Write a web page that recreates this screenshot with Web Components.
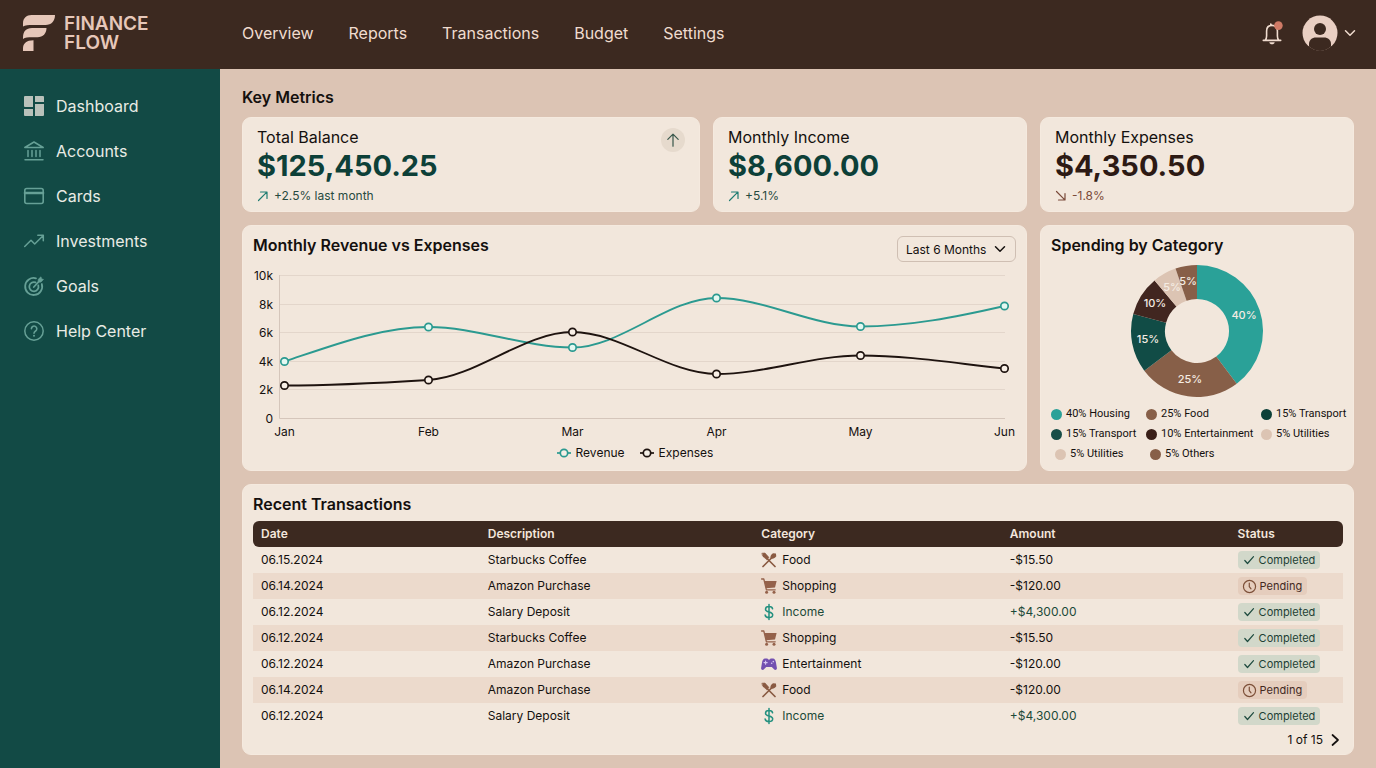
<!DOCTYPE html>
<html lang="en">
<head>
<meta charset="utf-8">
<meta name="viewport" content="width=device-width, initial-scale=1">
<title>Finance Flow</title>
<style>
  :root {
    --brown: #3c2920;
    --teal-dark: #124a45;
    --sand: #dcc4b4;
    --card: #f2e7dc;
    --stripe: #ecdacc;
    --ink: #14100e;
    --cream: #f0dccf;
  }
  body {
    margin: 0;
    font-family: Inter, "Liberation Sans", sans-serif;
    color: var(--ink);
    background: var(--sand);
  }
</style>
</head>
<body>
<ff-app>
  <ff-topbar slot="top"></ff-topbar>
  <ff-sidebar slot="side"></ff-sidebar>
  <ff-metric label="Total Balance" value="$125,450.25" delta="+2.5% last month" trend="up" badge></ff-metric>
  <ff-metric label="Monthly Income" value="$8,600.00" delta="+5.1%" trend="up"></ff-metric>
  <ff-metric label="Monthly Expenses" value="$4,350.50" delta="-1.8%" trend="down"></ff-metric>
  <ff-line-chart></ff-line-chart>
  <ff-spending></ff-spending>
  <ff-transactions></ff-transactions>
</ff-app>

<script>
const ICONS = {
  dashboard: ['0 0 20 20', '<path fill="currentColor" stroke="none" d="M1 0h8v11H1a1 1 0 0 1-1-1V1a1 1 0 0 1 1-1zM11 0h8a1 1 0 0 1 1 1v5h-9zM0 13h9v7H1a1 1 0 0 1-1-1zM11 8h9v11a1 1 0 0 1-1 1h-8z"/>'],
  bank: ['0 0 20 20', '<path stroke-width="1.5" d="M.8 6.5 10 1l9.2 5.5zM4 9.5v6M8 9.5v6M12 9.5v6M16 9.5v6M1 18.8h18"/>'],
  card: ['0 0 20 20', '<rect x=".8" y="2.5" width="18.4" height="15" rx="2" stroke-width="1.6"/><path d="M1 7h18" stroke-width="2.6"/>'],
  trend: ['0 0 20 20', '<path stroke-width="1.5" d="M.7 15.5 7 9.2l3.7 3.8L19 4.7M13.8 4.2h5.5v5.5"/>'],
  target: ['0 0 20 20', '<path stroke-width="1.8" d="M12 2.3A8.5 8.5 0 1 0 17.8 8M11.5 6.4a4.6 4.6 0 1 0 2.8 3M9.8 11l4.7-5"/><path d="m14 6 .3-2.8L17 .8l.5 2 2 .6L17 6z" fill="currentColor" stroke-width=".6"/>'],
  help: ['0 0 20 20', '<circle cx="10" cy="10" r="9.2" stroke-width="1.5"/><path stroke-width="1.6" d="M7.4 7.800a2.7 2.7 0 1 1 4.2 2.2c-1 .7-1.600 1.200-1.600 2.300"/><circle cx="10" cy="14.8" r="1" fill="currentColor" stroke="none"/>'],
  bell: ['0 0 20 24', '<path stroke-width="1.6" d="M1.3 19.4h17.4M3.3 19c1-1 1.3-2.5 1.3-4V10c0-3.2 2-5.6 5.4-5.6 3.3 0 5.4 2.4 5.4 5.6v5c0 1.5.3 3 1.3 4M8.8 4V3"/><path d="M7.3 21.3h5.4c-.3 1.5-1.3 2-2.7 2s-2.4-.5-2.7-2z" fill="currentColor" stroke="none"/><circle cx="16.4" cy="4.6" r="4.3" fill="#cf7a66" stroke="none"/>'],
  avatar: ['0 0 36 36', '<circle cx="18" cy="18" r="17.5" fill="#e9cfc3" stroke="none"/><circle cx="18" cy="14" r="6" fill="#3c2920" stroke="none"/><path d="M7 31.5V29c0-4 3-6.5 7-6.5h8c4 0 7 2.5 7 6.5v2.5A17.5 17.5 0 0 1 18 36 17.5 17.5 0 0 1 7 31.5z" fill="#3c2920" stroke="none"/>'],
  down: ['0 0 12 12', '<path stroke-width="1.5" d="m1.5 3.8 4.5 4.4 4.5-4.4"/>'],
  right: ['0 0 12 12', '<path stroke-width="1.7" d="M3.5 1 9 6l-5.5 5"/>'],
  arrowUp: ['0 0 14 14', '<path stroke-width="1.2" d="M7 13.2V1.2M1.8 6.4 7 1.2l5.2 5.2"/>'],
  up: ['0 0 12 12', '<path stroke-width="1.2" d="M1.5 10.5 9.8 2.2M3.5 2h6.5v6.5"/>'],
  fall: ['0 0 12 12', '<path stroke-width="1.2" d="M1.5 1.5 9.8 9.8M10 3.5v6.5H3.5"/>'],
  check: ['0 0 12 12', '<path stroke-width="1.2" d="m1.8 6.5 2.7 3 6-6.8"/>'],
  clock: ['0 0 12 12', '<circle cx="6" cy="6" r="5.6" stroke-width="1.1"/><path stroke-width="1.1" d="M5.8 2.8v3.4l1.6 2"/>'],
  food: ['0 0 16 16', '<path stroke-width="1.7" d="M2 14.5 10.5 6M14 14.5 6.5 7"/><path d="M1.2 1.2 4 1l4 4.5-2.2 2.2L1.8 4.2z" fill="currentColor" stroke-width=".6"/><path d="M9.6 6.4c-.8-1.8.6-4 2.4-5.2l2.9.4.4 2.7c-1.4 2-3.6 3.2-5.7 2.1z" fill="currentColor" stroke="none"/>'],
  cart: ['0 0 16 16', '<path stroke-width="1.3" d="M.6 1h2.2l2.6 10.8h8.8"/><path d="M3.4 3h12.2l-1.6 6.4-9 .8z" fill="currentColor" stroke="none"/><circle cx="5.6" cy="14.2" r="1.5" fill="currentColor" stroke="none"/><circle cx="13" cy="14.2" r="1.5" fill="currentColor" stroke="none"/>'],
  dollar: ['0 0 16 16', '<path stroke-width="1.5" d="M8 .6v14.8M11.6 4.8C11.4 3.3 10 2.5 8 2.5S4.500 3.5 4.5 5.2c0 3.8 7.2 1.7 7.2 5.6 0 1.8-1.600 2.800-3.700 2.800s-3.700-1-3.900-2.700"/>'],
  game: ['0 0 16 16', '<path d="M4 2.6h2.4l.8 1h1.6l.8-1H12c1.6 0 2.6 1.6 3 4.2l.9 5.2c.2 1.6-1.7 2.6-2.9 1.3L10.8 11H5.2L3 13.3C1.8 14.6-.1 13.6.1 12L1 6.8C1.4 4.2 2.4 2.6 4 2.6z" fill="#7350b0" stroke="none"/><path d="M4.6 5v3.2M3 6.6h3.2" stroke="#d6c6f2" stroke-width="1.1"/><circle cx="12.3" cy="5.6" r=".8" fill="#d6c6f2" stroke="none"/><circle cx="10.7" cy="7.3" r=".8" fill="#d6c6f2" stroke="none"/>'],
  logo: ['0 0 34 38', '<path fill="#e6c7b9" stroke="none" d="M1 12.5V9.5C1 4 4.5 1 9.5 1H33c0 6-3.5 10-9.5 10H11C6.5 11 3 11 1 12.5zM1 25v-1.5C1 17.5 4 14 10 14h14.5c0 5.5-3.5 9.3-9 9.3h-5.2C6 23.3 3 23.5 1 25zM1 37v-2.5c0-5 3.5-8.2 10.5-8.2V37z"/>']
};

class Base extends HTMLElement {
  connectedCallback() {
    if (this.shadowRoot) return;
    this.attachShadow({ mode: 'open' }).innerHTML = this.render();
  }
  attr(name) { return this.getAttribute(name) || ''; }
}

customElements.define('ff-icon', class extends Base {
  render() {
    const [box, body] = ICONS[this.attr('name')];
    return `<style>
      :host { display: inline-flex; width: 16px; height: 16px; flex: none; }
      svg { width: 100%; height: 100%; display: block; overflow: visible; }
    </style>
    <svg viewBox="${box}" fill="none" stroke="currentColor" stroke-linecap="round" stroke-linejoin="round" aria-hidden="true">${body}</svg>`;
  }
});

customElements.define('ff-app', class extends Base {
  render() {
    return `<style>
      :host { display: grid; grid-template: auto 1fr / 220px minmax(0, 1fr); min-height: 100vh; }
      ::slotted([slot=top]) { grid-column: 1 / -1; }
      main { padding: 18px 22px 13px; }
      h1 { margin: 0 0 9px; font-size: 16px; line-height: 21px; font-weight: 600; }
      .grid { display: grid; grid-template-columns: minmax(0, 458fr) minmax(0, 314fr) minmax(0, 314fr); gap: 13px; }
      ::slotted(ff-line-chart) { grid-column: span 2; }
      ::slotted(ff-transactions) { grid-column: 1 / -1; }
    </style>
    <slot name="top"></slot>
    <slot name="side"></slot>
    <main><h1>Key Metrics</h1><div class="grid"><slot></slot></div></main>`;
  }
});

customElements.define('ff-topbar', class extends Base {
  render() {
    const links = ['Overview', 'Reports', 'Transactions', 'Budget', 'Settings'];
    return `<style>
      :host { display: block; background: var(--brown); color: var(--cream); }
      header { display: flex; align-items: center; box-sizing: border-box; height: 69px; padding: 0 20px 3px 0; }
      .brand { display: flex; align-items: center; gap: 8px; width: 220px; padding-left: 22px; box-sizing: border-box; color: #e6c7b9; text-decoration: none; font-size: 19px; line-height: 19px; font-weight: 600; }
      .brand ff-icon { width: 34px; height: 38px; }
      nav { display: flex; gap: 35px; margin-left: 22px; flex: 1; }
      nav a { color: inherit; text-decoration: none; font-size: 16px; line-height: 24px; }
      button { all: unset; display: flex; align-items: center; cursor: pointer; }
      .bell { margin-right: 20px; }
      .bell ff-icon { width: 20px; height: 24px; }
      .user { gap: 6px; }
      .user ff-icon:first-child { width: 36px; height: 36px; }
      .user ff-icon:last-child { width: 12px; height: 12px; }
    </style>
    <header>
      <a class="brand" href="#"><ff-icon name="logo"></ff-icon><span>FINANCE<br>FLOW</span></a>
      <nav aria-label="Main">${links.map(l => `<a href="#">${l}</a>`).join('')}</nav>
      <button class="bell" aria-label="Notifications"><ff-icon name="bell"></ff-icon></button>
      <button class="user" aria-label="Account menu"><ff-icon name="avatar"></ff-icon><ff-icon name="down"></ff-icon></button>
    </header>`;
  }
});

customElements.define('ff-sidebar', class extends Base {
  render() {
    const items = [['dashboard', 'Dashboard'], ['bank', 'Accounts'], ['card', 'Cards'], ['trend', 'Investments'], ['target', 'Goals'], ['help', 'Help Center']];
    return `<style>
      :host { display: block; background: var(--teal-dark); }
      nav { display: flex; flex-direction: column; gap: 21px; padding: 25px 24px; }
      a { display: flex; align-items: center; gap: 12px; color: #e9ece5; text-decoration: none; font-size: 16px; line-height: 24px; }
      ff-icon { width: 20px; height: 20px; color: #66a096; }
      a:first-child ff-icon { color: #b9c1ba; }
    </style>
    <nav aria-label="Sections">${items.map(([i, t]) => `<a href="#"><ff-icon name="${i}"></ff-icon>${t}</a>`).join('')}</nav>`;
  }
});

customElements.define('ff-panel', class extends Base {
  render() {
    return `<style>
      :host { display: block; box-sizing: border-box; height: 100%; background: var(--card); border: 1px solid #f5eadf; border-radius: 9px; padding: 10px 10px 6px; }
    </style><slot></slot>`;
  }
});

customElements.define('ff-metric', class extends Base {
  render() {
    const up = this.attr('trend') === 'up';
    return `<style>
      :host { display: block; }
      .row { display: flex; justify-content: space-between; padding: 0 4px; }
      h2 { margin: 0; font-size: 16px; line-height: 18px; font-weight: 400; }
      .value { font-size: 29px; line-height: 40px; font-weight: 700; color: ${up ? '#0d4038' : '#2d1a14'}; }
      .delta { display: flex; align-items: center; gap: 5px; font-size: 12px; line-height: 19px; color: ${up ? '#274a40' : '#7a4a3a'}; }
      .delta ff-icon { width: 12px; height: 12px; color: ${up ? '#1f7d72' : '#7a4a3a'}; }
      .badge { display: flex; align-items: center; justify-content: center; width: 24px; height: 24px; border-radius: 50%; background: #e6dacd; color: #37564a; }
      .badge ff-icon { width: 14px; height: 14px; }
    </style>
    <ff-panel><div class="row">
      <div>
        <h2>${this.attr('label')}</h2>
        <div class="value">${this.attr('value')}</div>
        <div class="delta"><ff-icon name="${up ? 'up' : 'fall'}"></ff-icon>${this.attr('delta')}</div>
      </div>
      ${this.hasAttribute('badge') ? '<span class="badge"><ff-icon name="arrowUp"></ff-icon></span>' : ''}
    </div></ff-panel>`;
  }
});

customElements.define('ff-line-chart', class extends Base {
  render() {
    const months = ['Jan', 'Feb', 'Mar', 'Apr', 'May', 'Jun'];
    const x = i => 31.5 + i * 144;
    const revenue = [95.5, 61, 81.5, 32, 60.5, 40];
    const expenses = [119.5, 114, 66, 108, 89.5, 102.5];
    const dots = (ys, c, f) => ys.map((y, i) => `<circle cx="${x(i)}" cy="${y}" r="3.7" fill="${f}" stroke="${c}" stroke-width="1.7"/>`).join('');
    // Tangents are flat at local extremes and follow the slope elsewhere.
    const curve = (ys, slopes) => ys.slice(1).reduce((d, y, i) =>
      d + `C${x(i) + 48} ${ys[i] + slopes[i]} ${x(i + 1) - 48} ${y - slopes[i + 1]} ${x(i + 1)} ${y}`, `M${x(0)} ${ys[0]}`);
    return `<style>
      :host { display: block; }
      .head { display: flex; justify-content: space-between; align-items: flex-start; }
      h2 { margin: 0; font-size: 16px; line-height: 19px; font-weight: 600; }
      .pick { position: relative; display: block; }
      select { appearance: none; display: block; box-sizing: border-box; width: 119px; height: 26px; padding: 0 8px; border: 1px solid #cfbfb3; border-radius: 6px; background: transparent; color: inherit; font: 12px Inter, "Liberation Sans", sans-serif; }
      .pick ff-icon { position: absolute; right: 10px; top: 7px; width: 12px; height: 12px; pointer-events: none; }
      .plot { display: block; width: 100%; margin-top: 4px; overflow: visible; }
      text { font-size: 12px; fill: #14100e; }
      .legend { display: flex; justify-content: center; gap: 14px; margin-top: 4px; font-size: 12px; line-height: 18px; }
      .legend span { display: flex; align-items: center; gap: 4px; }
      .legend svg { width: 16px; height: 12px; }
    </style>
    <ff-panel>
      <div class="head">
        <h2>Monthly Revenue vs Expenses</h2>
        <label class="pick"><select aria-label="Period"><option>Last 6 Months</option><option>Last 12 Months</option></select><ff-icon name="down"></ff-icon></label>
      </div>
      <svg class="plot" viewBox="0 0 763 174" role="img" aria-label="Revenue and expenses from January to June">
        <g stroke="#e3d6cb">${[9, 38, 66, 95, 123].map(y => `<path d="M26 ${y}.5H752"/>`).join('')}</g>
        <path d="M26.5 9v143.5H752" fill="none" stroke="#d5c6bb"/>
        <path d="${curve(revenue, [-16, 0, 0, 0, 0, -11])}" fill="none" stroke="#2b9a90" stroke-width="1.9"/>
        <path d="${curve(expenses, [0, -3, 0, 0, 0, 5])}" fill="none" stroke="#1e130f" stroke-width="1.9"/>
        ${dots(revenue, '#2b9a90', '#e4f8f1')}${dots(expenses, '#1e130f', '#f8efe6')}
        <g text-anchor="end">${['10k', '8k', '6k', '4k', '2k', '0'].map((t, i) => `<text x="20" y="${Math.round(14 + i * 28.5)}">${t}</text>`).join('')}</g>
        <g text-anchor="middle">${months.map((m, i) => `<text x="${x(i)}" y="170">${m}</text>`).join('')}</g>
      </svg>
      <div class="legend">
        ${[['Revenue', '#2b9a90'], ['Expenses', '#1e130f']].map(([t, c]) => `<span><svg viewBox="0 0 16 12" fill="#f5efe6" stroke="${c}" stroke-width="1.7" aria-hidden="true"><path d="M1 6h14"/><circle cx="8" cy="6" r="3.7"/></svg>${t}</span>`).join('')}
      </div>
    </ff-panel>`;
  }
});

customElements.define('ff-spending', class extends Base {
  render() {
    const slices = [
      [0, 143, '#2aa198', '40%', 114, 55], [143, 233, '#875f48', '25%', 60, 119],
      [233, 285, '#114c46', '15%', 18, 79], [285, 320, '#412620', '10%', 25, 43],
      [320, 341, '#dcc4b3', '5%', 42, 27], [341, 360, '#875f48', '5%', 58, 21]
    ];
    const p = (deg, r) => [67 + r * Math.sin(deg * Math.PI / 180), 67 - r * Math.cos(deg * Math.PI / 180)].map(n => n.toFixed(2)).join(' ');
    const legend = [
      [['#2aa198', '40% Housing'], ['#875f48', '25% Food'], ['#0c4038', '15% Transport']],
      [['#174d47', '15% Transport'], ['#3a1f18', '10% Entertainment'], ['#dcc4b3', '5% Utilities']],
      [['#dcc4b3', '5% Utilities'], ['#875f48', '5% Others']]
    ];
    return `<style>
      :host { display: block; }
      h2 { margin: 0; font-size: 16px; line-height: 19px; font-weight: 600; }
      .donut { display: block; width: 134px; height: 134px; margin: 9px auto 6px; }
      text { font-size: 11px; font-weight: 500; fill: #f5ece3; text-anchor: middle; }
      ul { display: grid; grid-template-columns: 95px 115px 1fr; margin: 0; padding: 0; list-style: none; font: 11px/20px Roboto, Inter, sans-serif; white-space: nowrap; }
      ul:last-child { padding-left: 4px; }
      li { display: flex; align-items: center; gap: 4px; }
      i { flex: none; width: 11px; height: 11px; border-radius: 50%; background: var(--c); }
    </style>
    <ff-panel>
      <h2>Spending by Category</h2>
      <svg class="donut" viewBox="0 0 134 134" role="img" aria-label="Spending by category">
        ${slices.map(([a, b, c]) => `<path fill="${c}" d="M${p(a, 66)}A66 66 0 0 1 ${p(b, 66)}L${p(b, 32)}A32 32 0 0 0 ${p(a, 32)}z"/>`).join('')}
        ${slices.map(([, , , t, x, y]) => `<text x="${x}" y="${y}">${t}</text>`).join('')}
      </svg>
      ${legend.map(row => `<ul>${row.map(([c, t]) => `<li><i style="--c:${c}"></i>${t}</li>`).join('')}</ul>`).join('')}
    </ff-panel>`;
  }
});

customElements.define('ff-status', class extends Base {
  render() {
    const done = this.attr('state') === 'Completed';
    return `<style>
      :host { display: flex; width: fit-content; align-items: center; gap: 4px; padding: 0 5px; border-radius: 4px; font-size: 11px; line-height: 18px;
        background: ${done ? '#d2d8ca' : '#e5cdbd'}; color: ${done ? '#1d3f35' : '#43291f'}; }
      ff-icon { width: ${done ? 12 : 13}px; height: ${done ? 12 : 13}px; color: ${done ? '#1d4a3e' : '#7d5039'}; }
    </style><ff-icon name="${done ? 'check' : 'clock'}"></ff-icon>${this.attr('state')}`;
  }
});

customElements.define('ff-transactions', class extends Base {
  render() {
    const kinds = { Food: ['food', '#8a5a42'], Shopping: ['cart', '#94614a'], Income: ['dollar', '#23907f'], Entertainment: ['game', '#7350b0'] };
    const rows = [
      ['06.15.2024', 'Starbucks Coffee', 'Food', '-$15.50', 'Completed'],
      ['06.14.2024', 'Amazon Purchase', 'Shopping', '-$120.00', 'Pending'],
      ['06.12.2024', 'Salary Deposit', 'Income', '+$4,300.00', 'Completed'],
      ['06.12.2024', 'Starbucks Coffee', 'Shopping', '-$15.50', 'Completed'],
      ['06.12.2024', 'Amazon Purchase', 'Entertainment', '-$120.00', 'Completed'],
      ['06.14.2024', 'Amazon Purchase', 'Food', '-$120.00', 'Pending'],
      ['06.12.2024', 'Salary Deposit', 'Income', '+$4,300.00', 'Completed']
    ];
    return `<style>
      :host { display: block; }
      h2 { margin: 0 0 7px; font-size: 16px; line-height: 19px; font-weight: 600; }
      table { width: 100%; table-layout: fixed; border-collapse: separate; border-spacing: 0; font-size: 12px; line-height: 18px; }
      th, td { height: 26px; padding: 0 8px; text-align: left; vertical-align: middle; box-sizing: border-box; }
      th { background: var(--brown); color: #f3e6dc; font-weight: 600; }
      th:first-child { border-radius: 6px 0 0 6px; width: 20.8%; }
      th:nth-child(2) { width: 25.1%; }
      th:nth-child(3) { width: 22.8%; }
      th:nth-child(4) { width: 20.9%; }
      th:last-child { border-radius: 0 6px 6px 0; }
      tr:nth-child(even) td { background: var(--stripe); }
      .cat { display: flex; align-items: center; gap: 5px; }
      .in { color: #1c4a38; }
      footer { display: flex; justify-content: flex-end; align-items: center; gap: 6px; font-size: 12px; line-height: 17px; padding: 2px 2px 0 0; }
      button { all: unset; display: flex; cursor: pointer; }
      button ff-icon { width: 12px; height: 12px; }
    </style>
    <ff-panel>
      <h2>Recent Transactions</h2>
      <table>
        <thead><tr>${['Date', 'Description', 'Category', 'Amount', 'Status'].map(h => `<th scope="col">${h}</th>`).join('')}</tr></thead>
        <tbody>${rows.map(([d, n, c, a, s]) => {
          const tone = c === 'Income' ? 'in' : '';
          return `<tr><td>${d}</td><td>${n}</td><td><span class="cat ${tone}"><ff-icon name="${kinds[c][0]}" style="color:${kinds[c][1]}"></ff-icon>${c}</span></td><td class="${tone}">${a}</td><td><ff-status state="${s}"></ff-status></td></tr>`;
        }).join('')}</tbody>
      </table>
      <footer><span>1 of 15</span><button aria-label="Next page"><ff-icon name="right"></ff-icon></button></footer>
    </ff-panel>`;
  }
});
</script>
</body>
</html>
